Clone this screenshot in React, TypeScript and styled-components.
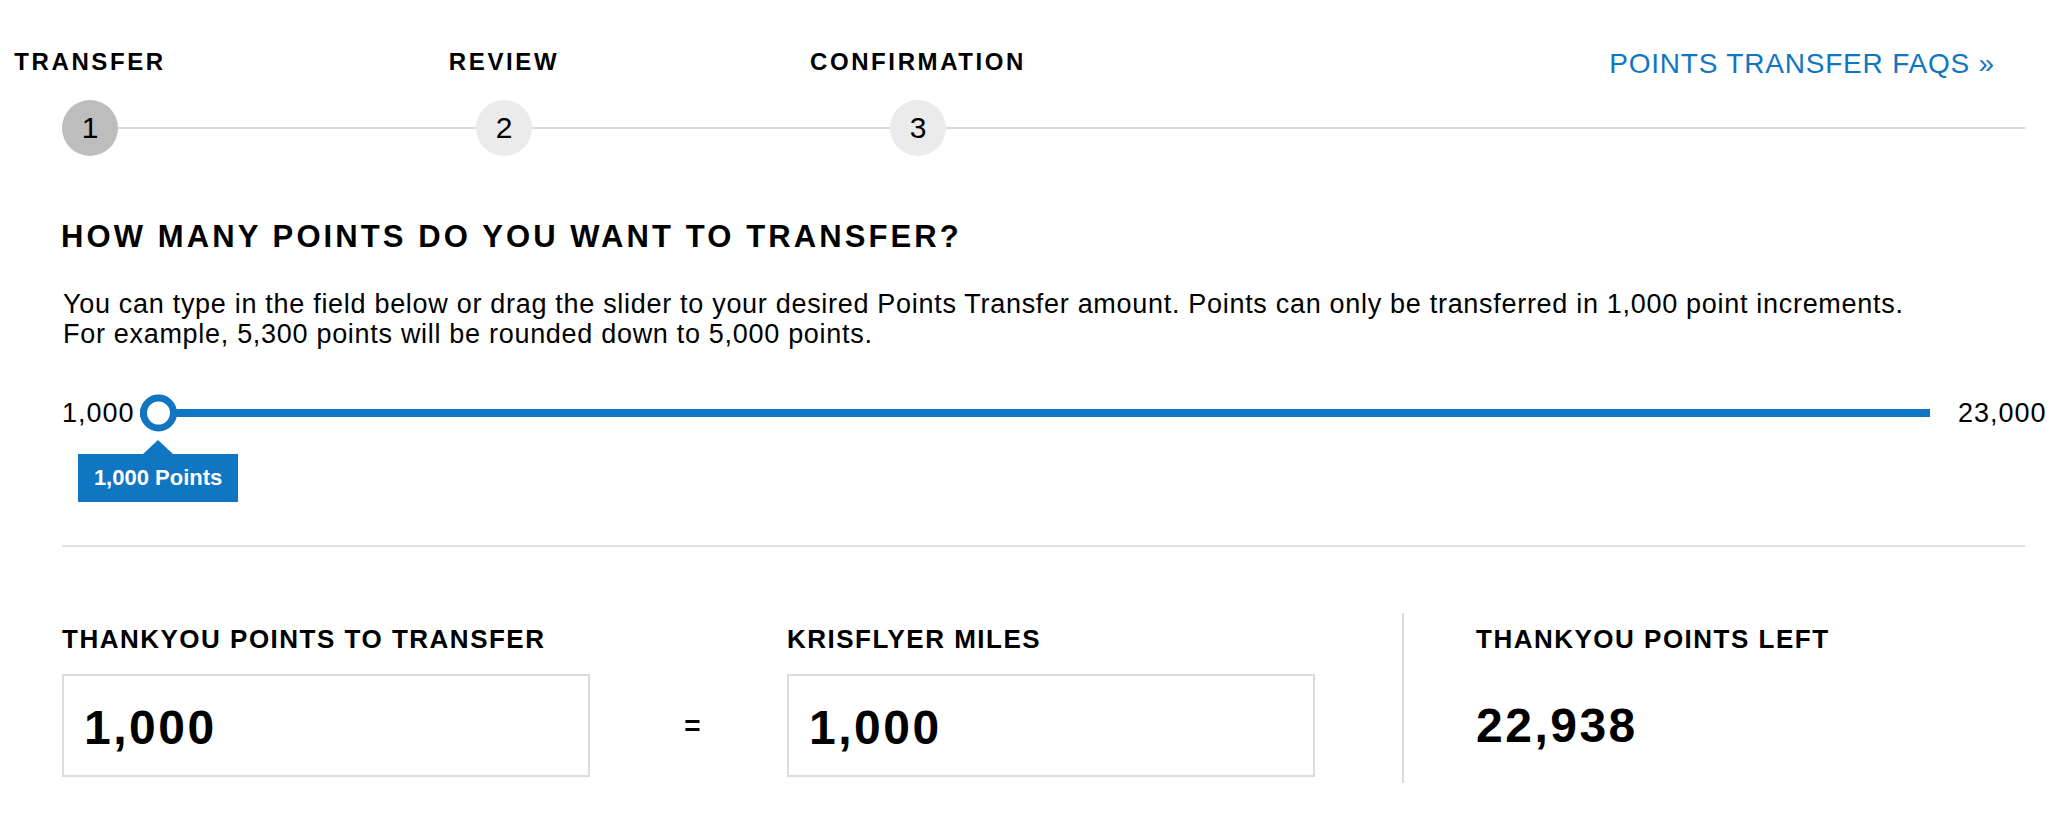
import { Fragment } from 'react';
import styled, { createGlobalStyle } from 'styled-components';

const BLUE = '#1176c1';

const steps = ['TRANSFER', 'REVIEW', 'CONFIRMATION'];

const GlobalStyle = createGlobalStyle`
  body {
    margin: 0;
    background: #fff;
    color: #000;
    font-family: "Liberation Sans", Arial, sans-serif;
  }
`;

const App = () => {
  return (
    <Page>
      <GlobalStyle />
      <StepsHeader>
        <StepLabels>
          {steps.map((step) => (
            <StepLabel key={step}>{step}</StepLabel>
          ))}
        </StepLabels>
        <FaqLink href="#">POINTS TRANSFER FAQS »</FaqLink>
      </StepsHeader>
      <StepTrack>
        {steps.map((step, index) => (
          <Fragment key={step}>
            <StepCircle $active={index === 0}>{index + 1}</StepCircle>
            <Connector $last={index === steps.length - 1} />
          </Fragment>
        ))}
      </StepTrack>

      <Heading>HOW MANY POINTS DO YOU WANT TO TRANSFER?</Heading>
      <Intro>
        You can type in the field below or drag the slider to your desired Points Transfer amount. Points can only be
        transferred in 1,000 point increments.
        <br />
        For example, 5,300 points will be rounded down to 5,000 points.
      </Intro>

      <SliderRow>
        <RangeLabel>1,000</RangeLabel>
        <SliderTrack>
          <Thumb />
          <Tooltip>1,000 Points</Tooltip>
        </SliderTrack>
        <MaxLabel>23,000</MaxLabel>
      </SliderRow>

      <Divider />

      <BottomRow>
        <Field>
          <FieldLabel>THANKYOU POINTS TO TRANSFER</FieldLabel>
          <ValueBox>1,000</ValueBox>
        </Field>
        <Equals>=</Equals>
        <Field>
          <FieldLabel>KRISFLYER MILES</FieldLabel>
          <ValueBox>1,000</ValueBox>
        </Field>
        <Balance>
          <FieldLabel>THANKYOU POINTS LEFT</FieldLabel>
          <BalanceValue>22,938</BalanceValue>
        </Balance>
      </BottomRow>
    </Page>
  );
};

export default App;

const Page = styled.div`
  width: 2060px;
  padding-bottom: 40px;
`;

const StepsHeader = styled.div`
  display: flex;
  align-items: flex-start;
  height: 24px;
  padding-top: 50px;
`;

const StepLabels = styled.div`
  display: flex;
  gap: 234px;
`;

const StepLabel = styled.div`
  width: 180px;
  display: flex;
  justify-content: center;
  white-space: nowrap;
  font-size: 24px;
  line-height: 24px;
  font-weight: 700;
  letter-spacing: 2.6px;
`;

const FaqLink = styled.a`
  margin-left: auto;
  margin-right: 65px;
  font-size: 28px;
  line-height: 28px;
  letter-spacing: 0.8px;
  color: ${BLUE};
  text-decoration: none;
`;

const StepTrack = styled.div`
  display: flex;
  align-items: center;
  margin: 26px 35px 0 62px;
`;

const StepCircle = styled.div<{ $active?: boolean }>`
  flex: none;
  width: 56px;
  height: 56px;
  border-radius: 50%;
  background: ${({ $active }) => ($active ? '#bdbdbd' : '#ebebeb')};
  display: flex;
  align-items: center;
  justify-content: center;
  font-size: 30px;
  line-height: 30px;
`;

const Connector = styled.div<{ $last?: boolean }>`
  height: 2px;
  background: #d9d9d9;
  ${({ $last }) => ($last ? 'flex: 1;' : 'width: 358px; flex: none;')}
`;

const Heading = styled.h2`
  margin: 65px 0 0 61px;
  font-size: 31px;
  line-height: 31px;
  font-weight: 700;
  letter-spacing: 3.1px;
`;

const Intro = styled.p`
  margin: 37px 0 0 63px;
  font-size: 27px;
  line-height: 30px;
  letter-spacing: 0.7px;
`;

const SliderRow = styled.div`
  display: flex;
  align-items: center;
  height: 40px;
  margin-top: 44px;
  padding-left: 62px;
`;

const RangeLabel = styled.div`
  flex: none;
  font-size: 27px;
  line-height: 27px;
  letter-spacing: 1px;
`;

const MaxLabel = styled(RangeLabel)`
  width: 102px;
`;

const SliderTrack = styled.div`
  position: relative;
  flex: 1;
  height: 8px;
  margin: 0 28px 0 5px;
  background: ${BLUE};
`;

const Thumb = styled.div`
  position: absolute;
  left: 0;
  top: 50%;
  width: 37px;
  height: 37px;
  box-sizing: border-box;
  border: 7px solid ${BLUE};
  border-radius: 50%;
  background: #fff;
  transform: translateY(-50%);
`;

const Tooltip = styled.div`
  position: absolute;
  top: 45px;
  left: -61.5px;
  width: 160px;
  height: 48px;
  background: ${BLUE};
  color: #fff;
  font-size: 22px;
  line-height: 48px;
  font-weight: 700;
  text-align: center;

  &::before {
    content: '';
    position: absolute;
    top: -14px;
    left: 64.5px;
    border-left: 15.5px solid transparent;
    border-right: 15.5px solid transparent;
    border-bottom: 14px solid ${BLUE};
  }
`;

const Divider = styled.div`
  height: 2px;
  margin: 112px 35px 0 62px;
  background: #e1e1e1;
`;

const BottomRow = styled.div`
  display: flex;
  margin-top: 66px;
  padding-left: 62px;
`;

const Field = styled.div`
  flex: none;
  width: 528px;
  display: flex;
  flex-direction: column;
  padding: 13px 0 6px;
`;

const FieldLabel = styled.div`
  font-size: 26px;
  line-height: 26px;
  font-weight: 700;
  letter-spacing: 1.5px;
  white-space: nowrap;
`;

const ValueBox = styled.div`
  margin-top: 22px;
  height: 103px;
  box-sizing: border-box;
  border: 2px solid #dcdcdc;
  display: flex;
  align-items: center;
  padding: 5px 0 0 20px;
  font-size: 48px;
  line-height: 48px;
  font-weight: 700;
  letter-spacing: 2.5px;
`;

const Equals = styled.div`
  flex: none;
  width: 197px;
  display: flex;
  align-items: center;
  justify-content: center;
  padding: 61px 0 6px 8px;
  box-sizing: border-box;
  font-size: 28px;
  font-weight: 700;
`;

const Balance = styled.div`
  margin-left: 87px;
  padding: 13px 0 0 72px;
  border-left: 2px solid #dcdcdc;
`;

const BalanceValue = styled.div`
  margin-top: 50px;
  font-size: 48px;
  line-height: 48px;
  font-weight: 700;
  letter-spacing: 2.5px;
`;
